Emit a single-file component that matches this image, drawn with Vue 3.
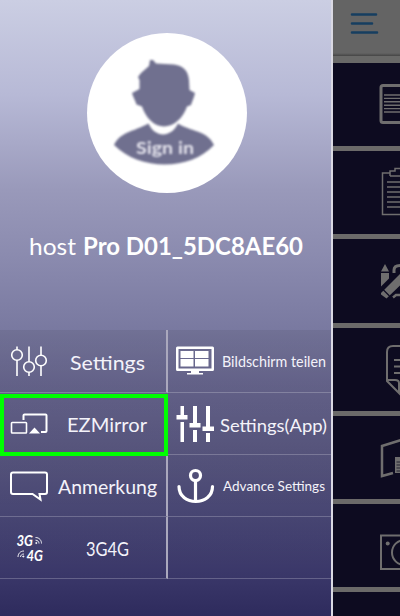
<script setup>
const items = [
  { icon: 'sliders', label: 'Settings', x: 20, y: 39.5, w: 75, size: 20 },
  { icon: 'split', label: 'Bildschirm teilen', x: 4, y: 36.5, w: 104, size: 14.5 },
  { icon: 'mirror', label: 'EZMirror', x: 17, y: 39, w: 80, size: 19, active: true },
  { icon: 'mixer', label: 'Settings(App)', x: 2, y: 39, w: 107, size: 18 },
  { icon: 'bubble', label: 'Anmerkung', x: 8, y: 39, w: 99, size: 20 },
  { icon: 'anchor', label: 'Advance Settings', x: 5, y: 36, w: 102, size: 13.5 },
  { icon: 'network', label: '3G4G', x: 36, y: 38.5, w: 43, size: 19 },
  { icon: '', label: '' },
]
const tools = ['list', 'clipboard', 'pencil', 'page', 'door', 'camera', '']
</script>

<template>
  <div class="screen">
    <aside class="drawer">
      <header class="profile">
        <div class="avatar">
          <svg width="160" height="160" viewBox="87 33 160 160">
            <g class="person">
              <path d="M139.500 89 L139.500 80 L138 77 L141 73 L149 66 L150 60 L153 60 L156 63.500 L174 64.500 C184 66 188 71 189 80 L189.500 90 L195 93 C194 98 192 101 191 105 L187 106.500 C183 118 174 126.500 164 126.500 C154 126.500 146 118 142 106.500 L136.500 104.500 C135 100 133 97 132 93 Z" />
              <path d="M114 145 C120 132 133 132 148.500 123.500 C155 138 171 138 178 123.500 C191 132 207 130 214 145 C190 171 140 171 114 145 Z" />
              <text x="136" y="153.500" textLength="58" lengthAdjust="spacingAndGlyphs">Sign in</text>
            </g>
          </svg>
        </div>
        <svg class="host" width="332" height="50" viewBox="0 220 332 50">
          <text class="light" x="29" y="254.5" textLength="47" lengthAdjust="spacingAndGlyphs">host</text>
          <text x="83" y="254.5" textLength="220" lengthAdjust="spacingAndGlyphs">Pro D01_5DC8AE60</text>
        </svg>
      </header>

      <nav class="menu">
        <div v-for="(item, i) in items" :key="i" class="cell" :class="{ active: item.active }">
          <svg class="icon" width="50" height="62" viewBox="0 0 50 62">
            <g v-if="item.icon === 'sliders'" class="line">
              <path d="M17 16.500v3.200M17 30.300V46M29 16.500v15.200M29 42.300V46M41 16.500v8.700M41 35.800V46" />
              <circle cx="17" cy="25" r="5.3" /><circle cx="29" cy="37" r="5.3" /><circle cx="41" cy="30.5" r="5.3" />
            </g>
            <g v-else-if="item.icon === 'split'">
              <path fill-rule="evenodd" d="M10.5 16.5h35a1.5 1.5 0 0 1 1.5 1.5v21.500a1.500 1.500 0 0 1-1.500 1.500h-35a1.500 1.500 0 0 1-1.500-1.500V18a1.500 1.500 0 0 1 1.500-1.500ZM11.500 19v19.500h33V19Z" />
              <path d="M13.500 21h13v7h-13zM28 21h13.500v7H28zM13.500 29h13v7.500h-13zM28 29h13.500v7.500H28zM24 41h8v2h4v1.500H20V43h4z" />
            </g>
            <g v-else-if="item.icon === 'mirror'" class="line">
              <rect x="11.500" y="29.500" width="15" height="10.500" rx=".7" />
              <path d="M23.500 27v-4.500a1 1 0 0 1 1-1h21a1 1 0 0 1 1 1V38a1 1 0 0 1-1 1H41" stroke-width="2" />
              <path class="solid" d="m29 40.500 5.500-6 5.500 6z" />
            </g>
            <g v-else-if="item.icon === 'mixer'">
              <path d="M13.500 13h3.500v9h3.500v4.500H9.500V22h4zM13.500 29h3.500v20h-3.500zM26 13h4v17h3.500v4.500h-11V30H26zM26 37h4v12h-4zM39 13h4v20.500h4V38H35.500v-4.500H39zM39 40h4v9h-4z" />
            </g>
            <g v-else-if="item.icon === 'bubble'" class="line">
              <path stroke-width="2" d="M13 17.500h32a2 2 0 0 1 2 2V37a2 2 0 0 1-2 2h-5.500l1 5.500-8-5.500H13a2 2 0 0 1-2-2V19.500a2 2 0 0 1 2-2Z" />
            </g>
            <g v-else-if="item.icon === 'anchor'" class="line heavy">
              <circle cx="28.500" cy="20.500" r="5" />
              <path d="M28.500 26v20" /><path stroke-linecap="round" d="M12 31.500c0 20 33.500 20 33.500 0" />
            </g>
            <g v-else-if="item.icon === 'network'">
              <text class="net" x="16.500" y="28.500" textLength="16.500" lengthAdjust="spacingAndGlyphs">3G</text>
              <text class="net" x="26.500" y="44" textLength="16.500" lengthAdjust="spacingAndGlyphs">4G</text>
              <g class="wave">
                <path d="M35.500 20.500c4 0 6 3 6 6M35.500 23.200c2.300 0 3.500 1.500 3.500 3.300M24 34c-4 0-6 3-6 6M24 37c-2.300 0-3.500 1.500-3.500 3" />
                <circle cx="36.300" cy="26" r=".6" /><circle cx="23.300" cy="39.500" r=".6" />
              </g>
            </g>
          </svg>
          <svg v-if="item.label" class="label" width="114" height="62" viewBox="0 0 114 62">
            <text :x="item.x" :y="item.y" :font-size="item.size" :textLength="item.w" lengthAdjust="spacingAndGlyphs">{{ item.label }}</text>
          </svg>
        </div>
      </nav>
    </aside>

    <main class="content">
      <div class="topbar">
        <svg width="67" height="54" viewBox="333 0 67 54">
          <path d="M352 14.500h24M352 23.500h20M352 32.500h25" />
        </svg>
      </div>
      <div v-for="(tool, i) in tools" :key="i" class="tool">
        <svg width="67" height="84" viewBox="0 0 67 84">
          <g v-if="tool === 'list'">
            <rect x="48" y="22.500" width="34" height="37" rx="2" stroke-width="3" />
            <path stroke-width="1.400" d="M51 32h20M51 35.400h20M51 38.800h20M51 42.200h20M51 45.600h20M51 49h20" />
          </g>
          <g v-else-if="tool === 'clipboard'">
            <path d="M57 22h-7.500v41.500H76M57 25v-5h5v-2.500h8M57 25h14" />
            <path d="M54 31h13M54 36h13M54 41h13M54 46h13M54 51h13M54 56h13" />
          </g>
          <g v-else-if="tool === 'pencil'">
            <path class="fill" d="m52 25 4 7.500h-8zM48 34h8v5.500l-8 8z" />
            <path class="fill" d="m48 54 19-19v11.500L53.500 59.500l-5.500-4z" />
            <path stroke="#0d0b20" stroke-width="1.200" d="m50 50.500 6.500 6.500" />
            <path d="M61 34v-3c0-3 2-4.500 6-4.500" stroke-width="3" /><path d="m60 58.500 3-2.500h5" stroke-width="2.500" />
          </g>
          <g v-else-if="tool === 'page'">
            <path stroke-width="2" d="M75 18H60c-4 0-6 2.500-6 6v29l12 12V55c0-2-2-3-4-3h-8M75 65h-9M61 32h12M61 38.500h12M61 45h12" />
          </g>
          <g v-else-if="tool === 'door'">
            <path stroke-width="2.500" d="m68 24-19 6v30l11-3" />
            <path class="fill" d="M62 41h8v16h-8z" /><path class="stripe" d="M63.500 46H70M63.500 49H70M63.500 52H70M63.500 55H70" />
          </g>
          <g v-else-if="tool === 'camera'">
            <path stroke-width="2" d="M70 31.500H48V65h22" />
            <circle class="fill" cx="54.700" cy="39.500" r="2" /><circle cx="71.500" cy="48.500" r="12.500" stroke-width="2" />
          </g>
        </svg>
      </div>
    </main>
  </div>
</template>

<style>
body { margin: 0; overflow: hidden; }
</style>

<style scoped>
.screen { display: flex; width: 400px; height: 616px; overflow: hidden; font-family: "Lato", sans-serif; background: #0d0b20; }
.drawer { box-sizing: border-box; width: 333px; flex: none; border-right: 2px solid #dad9e3; background: linear-gradient(#cbcee3 0, #b7b9d6 95px, #9999ba 190px, #8b8baf 255px, #7979a0 330px, #66648d 392px, #58567f 454px, #484674 516px, #393668 579px, #2e2b5d 616px); }
.profile { height: 330px; box-sizing: border-box; padding-top: 33px; }
.avatar { width: 160px; height: 160px; margin-left: 87px; border-radius: 50%; background: #fff; overflow: hidden; }
.avatar svg, .host, .icon, .label, .tool svg { display: block; }
.person { fill: #70708f; filter: blur(1px); }
.person text { fill: #e6e5ee; font-size: 17px; font-weight: 700; }
.host { margin-top: 27px; }
.host text { fill: #fff; font-size: 24px; font-weight: 700; }
.host .light { font-weight: 400; }
.menu { display: grid; grid-template-columns: 168px 163px; grid-template-rows: 63px 62px 62px 62px; background: linear-gradient(#00000012, #00000000); }
.cell { box-sizing: border-box; display: flex; min-width: 0; border-bottom: 1px solid #ffffff38; overflow: hidden; }
.cell:nth-child(odd) { border-right: 2px solid #aaa8bd; }
.cell.active { border: 4px solid #0f0; margin: 1px 0 -1px; z-index: 1; }
.cell.active svg { margin: -5px 0 0 -4px; }
.cell.active .label { margin-left: 0; }
.cell:nth-child(even) .icon { margin-left: -1px; }
.cell:nth-child(even) .label { margin-left: 1px; }
.icon, .label { flex: none; fill: #fff; }
.label { fill: #f4f3fa; }
.line { fill: none; stroke: #fff; stroke-width: 1.600; }
.line .solid { fill: #fff; stroke: none; }
.line.heavy { stroke-width: 3.200; }
.net { font-size: 15px; font-weight: 700; font-style: italic; }
.wave { fill: #fff; stroke: #fff; stroke-width: .9; }
.wave path { fill: none; }
.content { width: 67px; flex: none; }
.topbar { box-sizing: border-box; height: 63px; border-bottom: 7px solid #696968; background: linear-gradient(#646464 53px, #454545 56px); }
.topbar svg { display: block; fill: none; stroke: #163e60; stroke-width: 2.500; stroke-linecap: round; }
.tool { box-sizing: border-box; height: 88.200px; border-bottom: 5px solid #6b6a69; overflow: hidden; }
.tool svg { fill: none; stroke: #6f6e6e; stroke-width: 1.500; }
.tool .fill { fill: #6f6e6e; stroke: none; }
.tool .stripe { stroke: #252331; stroke-width: 1; }
</style>
